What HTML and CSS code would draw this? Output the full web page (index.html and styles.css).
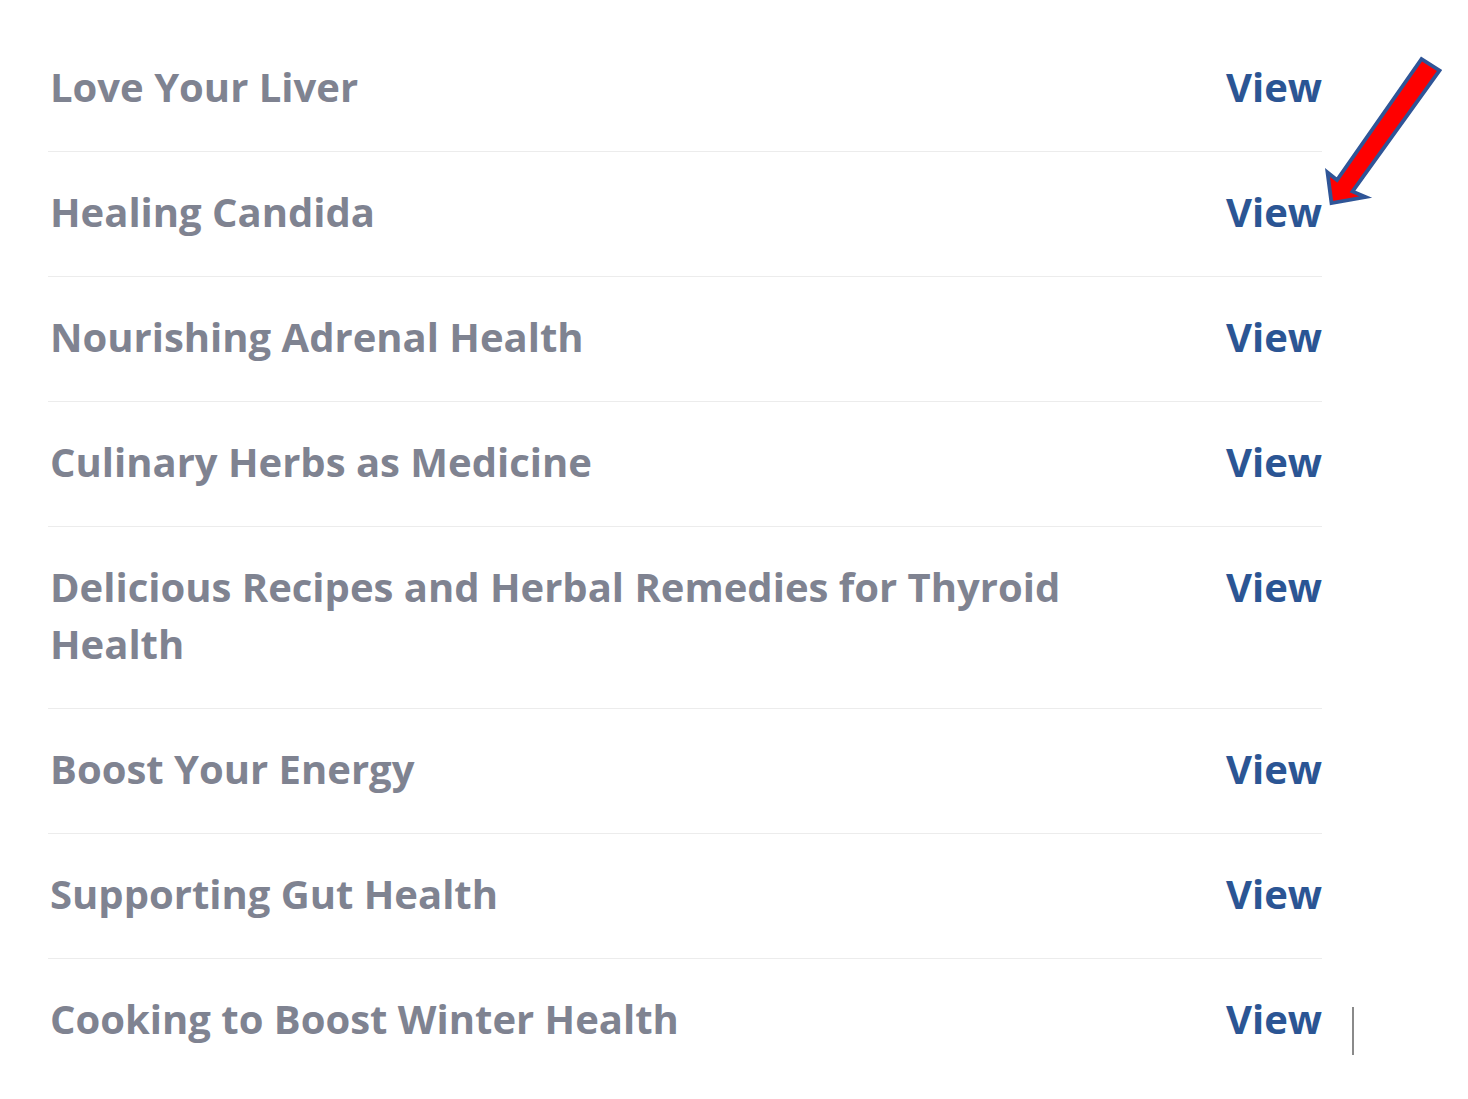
FILE: index.html
```html
<!DOCTYPE html>
<html lang="en">
<head>
<meta charset="utf-8">
<title>Recipes</title>
<link rel="stylesheet" href="styles.css">
</head>
<body>
<ul class="list">
  <li class="row"><span class="title">Love Your Liver</span><a class="view" href="#">View</a></li>
  <li class="row"><span class="title">Healing Candida</span><a class="view" href="#">View</a></li>
  <li class="row"><span class="title">Nourishing Adrenal Health</span><a class="view" href="#">View</a></li>
  <li class="row"><span class="title">Culinary Herbs as Medicine</span><a class="view" href="#">View</a></li>
  <li class="row"><span class="title">Delicious Recipes and Herbal Remedies for Thyroid Health</span><a class="view" href="#">View</a></li>
  <li class="row"><span class="title">Boost Your Energy</span><a class="view" href="#">View</a></li>
  <li class="row"><span class="title">Supporting Gut Health</span><a class="view" href="#">View</a></li>
  <li class="row"><span class="title">Cooking to Boost Winter Health</span><a class="view" href="#">View</a></li>
</ul>
<svg class="arrow" width="140" height="170" viewBox="1315 45 140 170" aria-hidden="true">
  <polygon points="1331.5,203 1327.5,172.5 1337,180 1421.5,59 1439.5,70.5 1352.5,191.5 1365.5,197" fill="#ff0000" stroke="#2f5597" stroke-width="3.8" stroke-linejoin="miter"/>
</svg>
<span class="caret"></span>
</body>
</html>
```
FILE: styles.css
```css
html, body {
  margin: 0;
  padding: 0;
  background: #ffffff;
}
body {
  position: relative;
  width: 1468px;
  height: 1099px;
  overflow: hidden;
  font-family: "Open Sans", "Liberation Sans", Arial, sans-serif;
}
.list {
  list-style: none;
  margin: 0 0 0 48px;
  padding: 27px 0 0 0;
  width: 1274px;
}
.row {
  display: flex;
  align-items: flex-start;
  justify-content: space-between;
  gap: 80px;
  padding: 31px 0 36px 2px;
  border-bottom: 1px solid #ececec;
  font-size: 40px;
  line-height: 57px;
  font-weight: 700;
}
.row:last-child {
  border-bottom: none;
}
.title {
  flex: 1;
  color: #7f8391;
}
.view {
  flex: none;
  color: #2b5594;
  text-decoration: none;
}
.arrow {
  position: absolute;
  left: 1315px;
  top: 45px;
}
.caret {
  position: absolute;
  left: 1352px;
  top: 1007px;
  width: 2px;
  height: 48px;
  background: #8a8a8a;
}
```
